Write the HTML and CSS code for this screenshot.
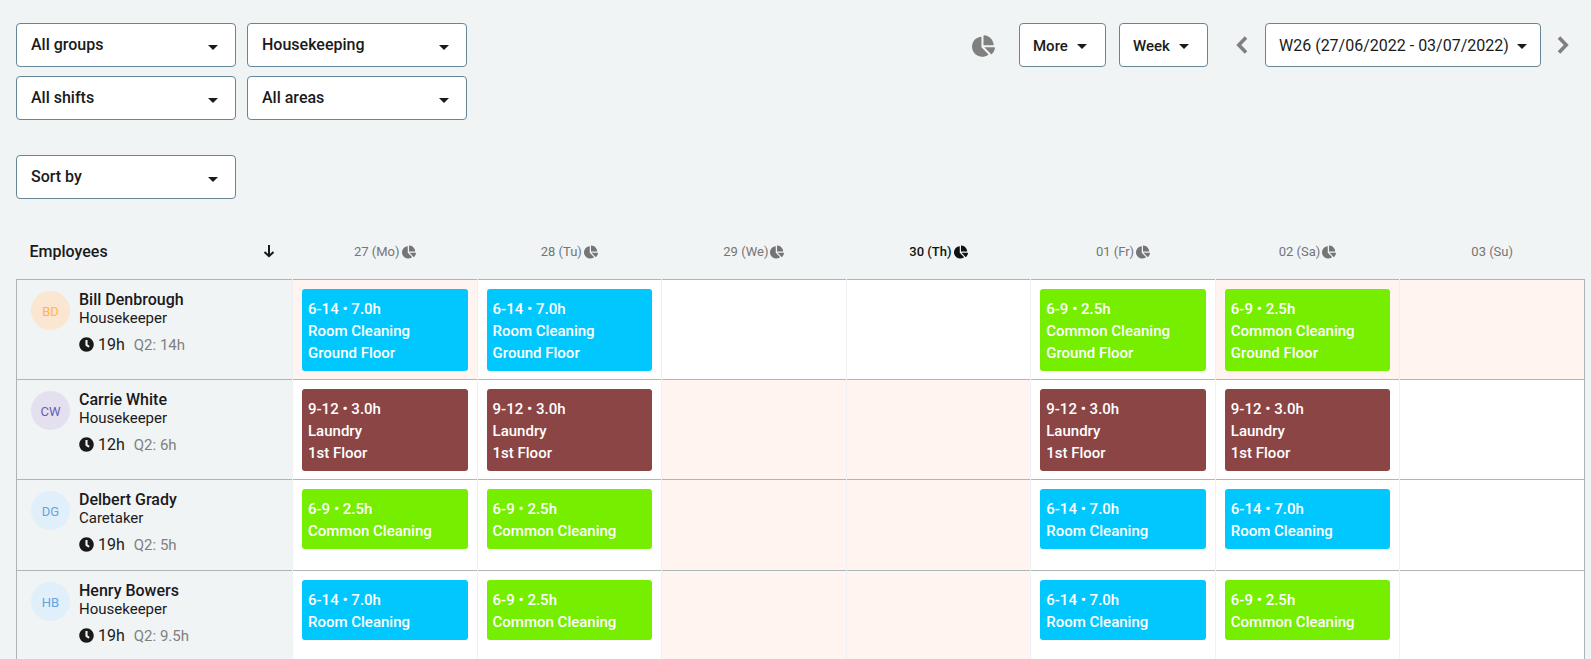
FILE: index.html
```html
<!DOCTYPE html>
<html lang="en">
<head>
<meta charset="utf-8">
<title>Schedule</title>
<link rel="stylesheet" href="styles.css">
</head>
<body>
<svg class="sprite" aria-hidden="true">
  <symbol id="pie" viewBox="0 0 544 512"><path d="M527.79 288H290.5l158.03 158.03c6.04 6.04 15.98 6.53 22.19.68 38.7-36.46 65.32-85.61 73.13-140.86 1.34-9.46-6.51-17.85-16.06-17.85zm-15.83-64.8C503.72 103.74 408.26 8.28 288.8.04 279.68-.59 272 7.1 272 16.24V240h223.77c9.14 0 16.82-7.68 16.19-16.8zM224 288V50.71c0-9.55-8.39-17.4-17.84-16.06C86.99 51.49-4.1 155.6.14 280.37 4.5 408.51 114.83 513.59 243.03 511.98c50.4-.63 96.97-16.87 135.26-44.03 7.9-5.6 8.42-17.23 1.57-24.08L224 288z"/></symbol>
  <symbol id="clock" viewBox="0 0 512 512"><path d="M256 8C119 8 8 119 8 256s111 248 248 248 248-111 248-248S393 8 256 8zm57.100 350.100L224.900 294c-3.100-2.300-4.900-5.900-4.900-9.700V116c0-6.600 5.400-12 12-12h48c6.600 0 12 5.400 12 12v137.700l63.500 46.200c5.400 3.900 6.500 11.400 2.600 16.800l-28.200 38.800c-3.900 5.300-11.400 6.500-16.800 2.600z"/></symbol>
  <symbol id="down" viewBox="0 0 12 14"><path d="M6 1v11M1.500 8L6 12.200L10.500 8" fill="none" stroke="currentColor" stroke-width="2"/></symbol>
  <symbol id="left" viewBox="0 0 12 18"><path d="M10 1.500L2.800 9l7.200 7.500" fill="none" stroke="currentColor" stroke-width="3.600"/></symbol>
  <symbol id="right" viewBox="0 0 12 18"><path d="M2 1.500L9.200 9L2 16.500" fill="none" stroke="currentColor" stroke-width="3.600"/></symbol>
</svg>
<main class="page">
  <div class="toolbar">
    <div class="filters">
      <label class="pick"><select aria-label="Groups"><option>All groups</option></select></label>
      <label class="pick"><select aria-label="Department"><option>Housekeeping</option></select></label>
      <label class="pick"><select aria-label="Shifts"><option>All shifts</option></select></label>
      <label class="pick"><select aria-label="Areas"><option>All areas</option></select></label>
    </div>
    <div class="controls">
      <button class="bare stats" aria-label="Statistics"><svg><use href="#pie"/></svg></button>
      <button class="box more">More<i class="caret"></i></button>
      <button class="box week">Week<i class="caret"></i></button>
      <button class="bare prev" aria-label="Previous week"><svg><use href="#left"/></svg></button>
      <button class="box range">W26 (27/06/2022 - 03/07/2022)<i class="caret"></i></button>
      <button class="bare next" aria-label="Next week"><svg><use href="#right"/></svg></button>
    </div>
  </div>
  <div class="sort"><label class="pick"><select aria-label="Sort"><option>Sort by</option></select></label></div>

  <table class="rota">
    <thead>
      <tr>
        <th class="who"><div class="head">Employees<svg class="arrow"><use href="#down"/></svg></div></th>
        <th><span class="day">27 (Mo)<svg><use href="#pie"/></svg></span></th>
        <th><span class="day">28 (Tu)<svg><use href="#pie"/></svg></span></th>
        <th><span class="day">29 (We)<svg><use href="#pie"/></svg></span></th>
        <th><span class="day today">30 (Th)<svg><use href="#pie"/></svg></span></th>
        <th><span class="day">01 (Fr)<svg><use href="#pie"/></svg></span></th>
        <th><span class="day">02 (Sa)<svg><use href="#pie"/></svg></span></th>
        <th><span class="day">03 (Su)</span></th>
      </tr>
    </thead>
    <tbody>
      <tr>
        <td class="who"><div class="person"><span class="avatar orange">BD</span><div><div class="name">Bill Denbrough</div><div class="role">Housekeeper</div><div class="hours"><svg><use href="#clock"/></svg>19h<span class="quarter">Q2: 14h</span></div></div></div></td>
        <td class="off"><div class="shift blue">6-14 • 7.0h<br>Room Cleaning<br>Ground Floor</div></td>
        <td><div class="shift blue">6-14 • 7.0h<br>Room Cleaning<br>Ground Floor</div></td>
        <td></td>
        <td></td>
        <td><div class="shift green">6-9 • 2.5h<br>Common Cleaning<br>Ground Floor</div></td>
        <td class="off"><div class="shift green">6-9 • 2.5h<br>Common Cleaning<br>Ground Floor</div></td>
        <td class="off"></td>
      </tr>
      <tr>
        <td class="who"><div class="person"><span class="avatar purple">CW</span><div><div class="name">Carrie White</div><div class="role">Housekeeper</div><div class="hours"><svg><use href="#clock"/></svg>12h<span class="quarter">Q2: 6h</span></div></div></div></td>
        <td><div class="shift brown">9-12 • 3.0h<br>Laundry<br>1st Floor</div></td>
        <td><div class="shift brown">9-12 • 3.0h<br>Laundry<br>1st Floor</div></td>
        <td class="off"></td>
        <td class="off"></td>
        <td><div class="shift brown">9-12 • 3.0h<br>Laundry<br>1st Floor</div></td>
        <td><div class="shift brown">9-12 • 3.0h<br>Laundry<br>1st Floor</div></td>
        <td></td>
      </tr>
      <tr>
        <td class="who"><div class="person"><span class="avatar sky">DG</span><div><div class="name">Delbert Grady</div><div class="role">Caretaker</div><div class="hours"><svg><use href="#clock"/></svg>19h<span class="quarter">Q2: 5h</span></div></div></div></td>
        <td><div class="shift green">6-9 • 2.5h<br>Common Cleaning</div></td>
        <td><div class="shift green">6-9 • 2.5h<br>Common Cleaning</div></td>
        <td class="off"></td>
        <td class="off"></td>
        <td><div class="shift blue">6-14 • 7.0h<br>Room Cleaning</div></td>
        <td><div class="shift blue">6-14 • 7.0h<br>Room Cleaning</div></td>
        <td></td>
      </tr>
      <tr>
        <td class="who"><div class="person"><span class="avatar sky">HB</span><div><div class="name">Henry Bowers</div><div class="role">Housekeeper</div><div class="hours"><svg><use href="#clock"/></svg>19h<span class="quarter">Q2: 9.5h</span></div></div></div></td>
        <td><div class="shift blue">6-14 • 7.0h<br>Room Cleaning</div></td>
        <td><div class="shift green">6-9 • 2.5h<br>Common Cleaning</div></td>
        <td class="off"></td>
        <td class="off"></td>
        <td><div class="shift blue">6-14 • 7.0h<br>Room Cleaning</div></td>
        <td><div class="shift green">6-9 • 2.5h<br>Common Cleaning</div></td>
        <td></td>
      </tr>
    </tbody>
  </table>
</main>
</body>
</html>
```
FILE: styles.css
```css
* { box-sizing: border-box; }
html { overflow: hidden; }
body {
  margin: 0;
  background: #f0f4f5;
  color: #1a1a1a;
  font: 400 16px/18px Roboto, "Liberation Sans", sans-serif;
}
svg { fill: currentColor; flex: none; }
.sprite { display: none; }
.page { padding: 23px 6px 0 16px; }

.toolbar { display: flex; justify-content: space-between; align-items: flex-start; }
.filters { display: grid; grid-template-columns: 220px 220px; gap: 9px 11px; }
.pick { position: relative; display: block; width: 220px; }
.pick select {
  appearance: none;
  display: block;
  width: 100%;
  height: 44px;
  padding: 0 40px 0 14px;
  border: 1px solid #668696;
  border-radius: 4px;
  background: #fff;
  color: inherit;
  font: 500 16px/18px Roboto, "Liberation Sans", sans-serif;
}
.pick::after, .caret {
  content: "";
  border: 5px solid transparent;
  border-top-color: #1a1a1a;
  border-bottom: 0;
}
.pick::after { position: absolute; right: 18px; top: 22px; pointer-events: none; }

.controls { display: flex; align-items: center; height: 44px; padding-right: 16px; }
.bare { display: flex; padding: 0; border: 0; background: none; color: #808080; }
.box {
  display: flex;
  align-items: center;
  justify-content: space-between;
  height: 44px;
  padding: 2px 18px 0 13px;
  border: 1px solid #668696;
  border-radius: 4px;
  background: #fff;
  color: inherit;
  font: 500 15px/18px Roboto, "Liberation Sans", sans-serif;
}
.stats { padding-top: 2px; }
.stats svg { width: 23px; height: 22px; }
.more { width: 87px; margin-left: 24px; }
.week { width: 89px; margin-left: 13px; }
.prev { margin-left: 28px; }
.prev svg, .next svg { width: 12px; height: 18px; }
.range { width: 276px; margin-left: 17px; padding-right: 13px; font-weight: 400; font-size: 16px; }
.next { margin-left: 16px; }
.sort { margin-top: 35px; }

.rota {
  width: 100%;
  margin-top: 24px;
  border-collapse: collapse;
  table-layout: fixed;
}
.rota th { height: 56px; padding: 2px 0 0; font-weight: 400; vertical-align: middle; }
.rota .who { width: 276px; background: none; }
.head { display: flex; justify-content: space-between; padding: 0 18px 0 13px; font-weight: 500; }
.arrow { width: 12px; height: 16px; }
.day { display: inline-flex; align-items: center; gap: 2px; color: #757575; font-size: 13px; }
.day svg { width: 14px; height: 14px; }
.today { color: #111; font-weight: 500; }

.rota tbody { border: 1px solid #adb5b9; }
.rota tbody tr { height: 91px; border-top: 1px solid #adb5b9; }
.rota td { padding: 9px 9px 8px; background: #fff; border-left: 1px solid #eef0f2; vertical-align: top; }
.rota td.off { background: #fff4ef; }
.rota td.who { padding: 11px 14px 0; border-left: 1px solid #adb5b9; }
.person { display: flex; gap: 9px; }
.avatar {
  flex: none;
  width: 39px;
  height: 39px;
  border-radius: 50%;
  font-size: 13px;
  line-height: 41px;
  text-align: center;
}
.orange { background: #fae6d1; color: #ffb74d; }
.purple { background: #e5e0f0; color: #5c62b3; }
.sky { background: #e1effb; color: #64a5dc; }
.name { font-weight: 500; }
.role { font-size: 15px; }
.hours { display: flex; align-items: center; margin-top: 9px; }
.hours svg { width: 15px; height: 15px; margin-right: 4px; }
.quarter { margin-left: 9px; color: #808080; font-size: 15px; }
.shift {
  padding: 9px 6px 7px;
  border-radius: 3px;
  color: #fff;
  font-size: 15px;
  font-weight: 500;
  line-height: 22px;
}
.blue { background: #00c8ff; }
.green { background: #76ee00; }
.brown { background: #8b4545; }
```
